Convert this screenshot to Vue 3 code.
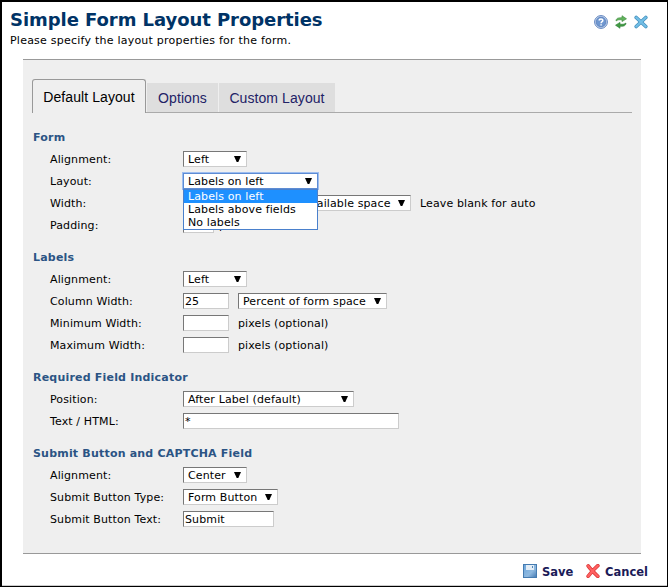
<script setup>
const sections = [
  {
    title: 'Form',
    rows: [
      { label: 'Alignment:', select: 'Left', size: 'w64' },
      { label: 'Layout:', select: 'Labels on left', size: 'w135', open: true, options: ['Labels on left', 'Labels above fields', 'No labels'] },
      { label: 'Width:', input: '', inputSize: 'w46', select: 'Percent of available space', size: 'w173', note: 'Leave blank for auto' },
      { label: 'Padding:', input: '', inputSize: 'w31', note: 'px', tight: true },
    ],
  },
  {
    title: 'Labels',
    rows: [
      { label: 'Alignment:', select: 'Left', size: 'w64' },
      { label: 'Column Width:', input: '25', inputSize: 'w46', select: 'Percent of form space', size: 'w149' },
      { label: 'Minimum Width:', input: '', inputSize: 'w46', note: 'pixels (optional)' },
      { label: 'Maximum Width:', input: '', inputSize: 'w46', note: 'pixels (optional)' },
    ],
  },
  {
    title: 'Required Field Indicator',
    rows: [
      { label: 'Position:', select: 'After Label (default)', size: 'w171' },
      { label: 'Text / HTML:', input: '*', inputSize: 'w216' },
    ],
  },
  {
    title: 'Submit Button and CAPTCHA Field',
    rows: [
      { label: 'Alignment:', select: 'Center', size: 'w64' },
      { label: 'Submit Button Type:', select: 'Form Button', size: 'w95' },
      { label: 'Submit Button Text:', input: 'Submit', inputSize: 'w91' },
    ],
  },
]
</script>

<template>
  <div class="dialog">
    <header class="head">
      <div>
        <h1>Simple Form Layout Properties</h1>
        <p>Please specify the layout properties for the form.</p>
      </div>
      <div class="tools">
        <svg width="14" height="14" viewBox="0 0 14 14">
          <circle cx="7" cy="7" r="6.4" fill="#d5e1f3" stroke="#5c81bd" />
          <circle cx="7" cy="7" r="4.9" fill="#6f97d0" stroke="#4f78b8" stroke-width=".7" />
          <path d="M5.2 5.6C5.2 3.4 8.9 3.4 8.8 5.5C8.8 6.7 7.1 6.7 7.1 8.2M7.1 9.3V10.6" fill="none" stroke="#fff" stroke-width="1.5" />
        </svg>
        <svg width="12" height="14" viewBox="0 0 12 14">
          <path d="M1 6C1 3.4 3 2.5 7 2.7V.7L11.5 3.8L7 6.6V4.8C4 4.6 2.6 4.8 1 6Z" fill="#62b35c" stroke="#39883b" stroke-width=".6" />
          <path d="M11 8C11 10.6 9 11.5 5 11.3V13.3L.5 10.2L5 7.4V9.2C8 9.4 9.4 9.2 11 8Z" fill="#429c43" stroke="#287b32" stroke-width=".6" />
        </svg>
        <svg width="14" height="14" viewBox="0 0 14 13">
          <path d="M2.2 2L11.8 11M11.8 2L2.2 11" stroke="#438fbd" stroke-width="3.6" stroke-linecap="round" />
          <path d="M2.2 2L11.8 11M11.8 2L2.2 11" stroke="#73bfe6" stroke-width="2.2" stroke-linecap="round" />
        </svg>
      </div>
    </header>

    <main class="panel">
      <nav class="tabs">
        <span class="tab active">Default Layout</span>
        <span class="tab options">Options</span>
        <span class="tab custom">Custom Layout</span>
      </nav>
      <section v-for="s in sections" :key="s.title">
        <h2>{{ s.title }}</h2>
        <div v-for="r in s.rows" :key="r.label" class="row" :class="{ tight: r.tight }">
          <span class="label">{{ r.label }}</span>
          <span v-if="r.input !== undefined" class="input" :class="r.inputSize">{{ r.input }}</span>
          <div v-if="r.select" class="select" :class="[r.size, { open: r.open }]">
            <span>{{ r.select }}</span>
            <svg class="arrow" width="7" height="6" viewBox="0 0 7 6"><path d="M0 0H7L4.3 6H2.7Z" fill="#000" /></svg>
            <div v-if="r.open" class="menu">
              <div v-for="(o, i) in r.options" :key="o" class="option" :class="{ chosen: i === 0 }">{{ o }}</div>
            </div>
          </div>
          <span v-if="r.note" class="note">{{ r.note }}</span>
        </div>
      </section>
    </main>

    <footer class="foot">
      <svg class="disk" width="14" height="14" viewBox="0 0 14 14">
        <defs>
          <linearGradient id="disk" x1="0" y1="0" x2="1" y2="1">
            <stop offset="0" stop-color="#6ba5dc" />
            <stop offset=".6" stop-color="#8fb9df" />
            <stop offset="1" stop-color="#4278b2" />
          </linearGradient>
        </defs>
        <rect x=".5" y=".5" width="13" height="13" fill="url(#disk)" stroke="#457bb0" />
        <rect x="3" y="1" width="8" height="5" fill="#e3edf6" />
        <rect x="9" y="2" width="1" height="2" fill="#5185b8" />
      </svg>
      <span class="action save">Save</span>
      <svg class="cross" width="14" height="14" viewBox="0 0 13 13">
        <path d="M2 1.8Q5 6 11 11.4M11 1.6Q6 6 2 11.4" fill="none" stroke="#d93535" stroke-width="3.4" stroke-linecap="round" />
        <path d="M2 1.8Q5 6 11 11.4M11 1.6Q6 6 2 11.4" fill="none" stroke="#ff6161" stroke-width="2.1" stroke-linecap="round" />
      </svg>
      <span class="action">Cancel</span>
    </footer>
  </div>
</template>

<style>
body { margin: 0; background: #fff; }
</style>

<style scoped>
.dialog {
  box-sizing: border-box;
  width: 668px;
  height: 587px;
  border: solid #000;
  border-width: 2px 1px 1px 2px;
  box-shadow: inset 0 -1px #ccc;
  background: #fff;
  color: #000;
  font: 11px/22px Verdana, "DejaVu Sans", sans-serif;
  letter-spacing: .12px;
  white-space: nowrap;
  overflow: hidden;
}
.head {
  box-sizing: border-box;
  height: 57px;
  padding: 6px 19px 0 8px;
  display: flex;
  justify-content: space-between;
}
h1 { margin: 0; font-size: 18px; line-height: 24px; color: #036; letter-spacing: -.06px; }
p { margin: 0; line-height: 18px; letter-spacing: .23px; }
.tools { display: flex; gap: 7px; padding-top: 7px; }
.tools svg { display: block; }
.panel {
  box-sizing: border-box;
  width: 618px;
  height: 495px;
  margin-left: 21px;
  border: solid #999;
  border-width: 1px 0;
  background: #efefef;
}
.tabs {
  box-sizing: border-box;
  display: flex;
  align-items: flex-end;
  height: 34px;
  margin: 19px 9px 3px;
  box-shadow: inset 0 -1px #aaa;
  font: 14px "Liberation Sans", sans-serif;
  letter-spacing: .08px;
}
.tab {
  box-sizing: border-box;
  height: 29px;
  margin: 0 0 1px 1px;
  background: #dedede;
  color: #226;
  text-align: center;
  line-height: 31px;
}
.tab.active {
  width: 114px;
  height: 34px;
  margin: 0;
  border: 1px solid #999;
  border-bottom: 0;
  border-radius: 3px 3px 0 0;
  background: #efefef;
  color: #000;
  line-height: 35px;
}
.options { width: 71px; }
.custom { width: 116px; }
h2 {
  margin: 0;
  padding: 11px 0 0 10px;
  font-size: 11px;
  line-height: 21px;
  letter-spacing: .2px;
  color: #2b5484;
}
.row { display: flex; align-items: center; height: 22px; padding-left: 27px; }
.label { width: 133px; }
.label, .note { height: 22px; line-height: 24px; }
.input, .select {
  box-sizing: border-box;
  height: 16px;
  border: 1px solid #777;
  border-right-color: #ccc;
  border-bottom-color: #ccc;
  background: #fff;
  line-height: 15px;
}
.input { padding-left: 1px; }
.select {
  position: relative;
  display: flex;
  align-items: center;
  justify-content: space-between;
  padding: 0 5px 0 4px;
}
.arrow { margin-bottom: 1px; }
.input + .select { margin-left: 9px; }
.note { margin-left: 9px; }
.tight .note { margin-left: 5px; }
.w31 { width: 31px; }
.w46 { width: 46px; }
.w64 { width: 64px; }
.w91 { width: 91px; }
.w95 { width: 95px; }
.w135 { width: 135px; }
.w149 { width: 149px; }
.w171 { width: 171px; }
.w173 { width: 173px; }
.w216 { width: 216px; }
.open { border-color: #5d8cd4; box-shadow: 0 0 0 1px #9dbdf0; }
.menu {
  position: absolute;
  z-index: 2;
  top: 15px;
  left: -1px;
  box-sizing: border-box;
  width: 135px;
  height: 41px;
  border: 1px solid #4a80cc;
  background: #fff;
}
.option { height: 13px; padding-left: 4px; line-height: 13px; }
.chosen { background: #1e90ff; color: #fff; }
.foot { display: flex; align-items: center; height: 31px; padding: 2px 0 0 521px; box-sizing: border-box; }
.action { font-weight: bold; font-size: 11.5px; letter-spacing: 0; line-height: 20px; color: #1b1b58; padding-top: 3px; }
.disk { margin-right: 5px; }
.save { width: 44px; }
.cross { margin-right: 5px; }
</style>
